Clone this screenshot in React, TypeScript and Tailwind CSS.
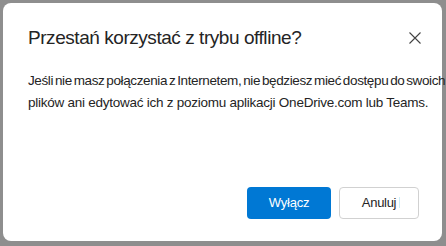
import React from "react";

export default function App() {
  return (
    <div className="w-[446px] h-[246px] bg-[#8e8e8e] pt-[3px] pl-[3px] pr-[4px] pb-[5px]" style={{ fontFamily: '"Liberation Sans", Arial, sans-serif' }}>
      <div className="relative w-full h-full bg-white rounded-lg flex flex-col pl-[25px] pr-[12px] pt-[21px] pb-[22px]">
        <div className="flex items-start justify-between pr-[11px]">
          <h1 className="text-[19px] leading-[28px] tracking-[-0.45px] text-[#242424]">Przestań korzystać z trybu offline?</h1>
          <button className="mt-[4px] mr-[-6px] w-[20px] h-[20px] flex items-center justify-center text-[#424242]">
            <svg width="12" height="12" viewBox="0 0 12 12" fill="none" stroke="currentColor" strokeWidth="1.1">
              <path d="M0.5 0.5 L11.5 11.5 M11.5 0.5 L0.5 11.5" />
            </svg>
          </button>
        </div>
        <p className="mt-[18px] text-[13.5px] leading-[22px] text-[#242424] whitespace-nowrap">
          <span className="tracking-[-0.38px] [word-spacing:-1.5px]">Jeśli nie masz połączenia z Internetem, nie będziesz mieć dostępu do swoich</span>
          <br />
          <span className="tracking-[-0.25px]">plików ani edytować ich z poziomu aplikacji OneDrive.com lub Teams.</span>
        </p>
        <div className="mt-auto flex justify-end gap-2 pr-[11px]">
          <button className="w-[84px] h-[32px] rounded-[4px] bg-[#0078d4] text-white text-[13px] tracking-[-0.2px]">Wyłącz</button>
          <button className="relative w-[80px] h-[32px] rounded-[4px] border border-[#d1d1d1] bg-white text-[#242424] text-[13px] tracking-[-0.3px]">
            Anuluj
            <span className="absolute left-[59px] top-[9px] w-px h-[11px] bg-[#cdeef7]" />
          </button>
        </div>
      </div>
    </div>
  );
}
